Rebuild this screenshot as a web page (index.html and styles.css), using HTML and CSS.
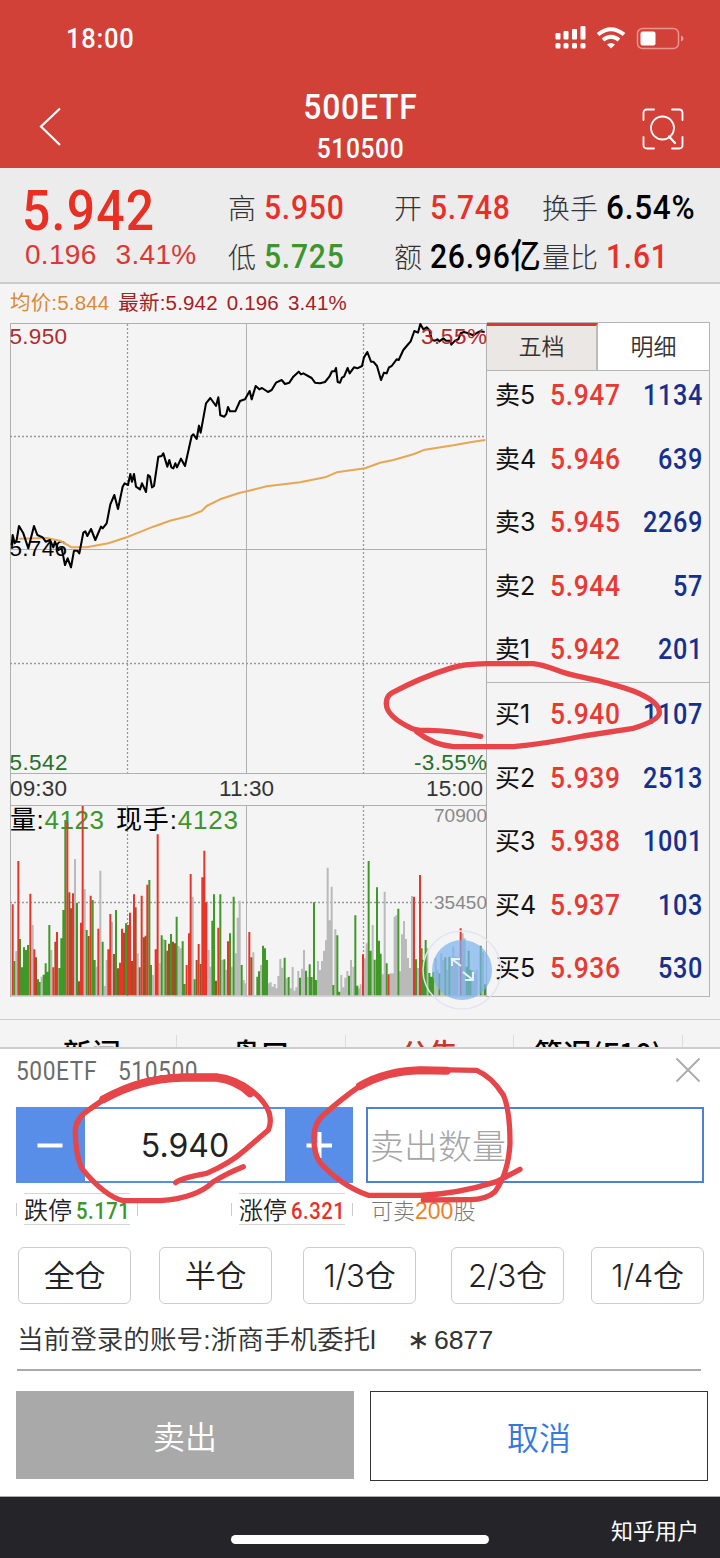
FILE: index.html
```html
<!DOCTYPE html>
<html lang="zh-CN">
<head>
<meta charset="utf-8">
<title>500ETF 510500</title>
<link rel="stylesheet" href="styles.css">
</head>
<body>
<div class="screen">
  <header class="top">
    <div class="status">
      <span class="clock din">18:00</span>
      <svg class="status-icons" width="130" height="28" viewBox="554 24 130 28">
        <g fill="#fff">
          <rect x="555.5" y="33" width="5" height="6.5" rx="1"/><rect x="563.5" y="31" width="5" height="8.500" rx="1"/><rect x="572" y="29" width="5" height="10.500" rx="1"/><rect x="580.500" y="26" width="5" height="13.500" rx="1"/>
          <rect x="555.500" y="43" width="5" height="5.500" rx="1.500"/><rect x="563.500" y="43" width="5" height="5.500" rx="1.500"/><rect x="572" y="43" width="5" height="5.500" rx="1.500"/><rect x="580.500" y="43" width="5" height="5.500" rx="1.500"/>
          <path d="M607 44.500Q611 41.500 615 44.500L611 48.500Z"/>
          <rect x="640.500" y="31.500" width="15" height="14" rx="2"/>
          <path d="M681 35.500q2.500 1 2.500 3t-2.500 3z" opacity=".5"/>
        </g>
        <path d="M598 34.500Q611 24 624 34.500M603 40Q611 33.500 619 40" fill="none" stroke="#fff" stroke-width="4"/>
        <rect x="637.500" y="28.500" width="41" height="20" rx="5" fill="none" stroke="#fff" stroke-width="1.500" opacity=".45"/>
      </svg>
    </div>
    <div class="nav">
      <svg class="back" width="24" height="40" viewBox="0 0 24 40"><path d="M21 1.500L2 19.500L21 38" fill="none" stroke="#fff" stroke-width="2.200"/></svg>
      <div class="title"><div class="name din">500ETF</div><div class="code din">510500</div></div>
      <svg class="scan" width="42" height="42" viewBox="0 0 42 42" fill="none" stroke="#fff" stroke-width="1.800" stroke-linecap="round"><path d="M12 1.500H5Q1.500 1.500 1.500 5V12M30 1.500H37Q40.500 1.500 40.500 5V12M1.500 29V37Q1.500 40.500 5 40.500H12M40.500 29V37Q40.500 40.500 37 40.500H30"/><circle cx="20.500" cy="20" r="11.500"/><path d="M27 28.500L33 35" stroke-width="2.200"/></svg>
    </div>
  </header>

  <section class="quote">
    <div class="last"><div class="last-price din">5.942</div><div class="last-change"><span>0.196</span><span>3.41%</span></div></div>
    <div class="stat"><label>高</label><b class="din red">5.950</b></div>
    <div class="stat"><label>开</label><b class="din red">5.748</b></div>
    <div class="stat"><label>换手</label><b class="din turnover">6.54%</b></div>
    <div class="stat"><label>低</label><b class="din green">5.725</b></div>
    <div class="stat"><label>额</label><b class="din">26.96亿</b></div>
    <div class="stat"><label>量比</label><b class="din red">1.61</b></div>
  </section>

  <div class="legend"><span class="avg">均价:5.844</span><span>最新:5.942</span><span>0.196</span><span>3.41%</span></div>

  <section class="market">
    <svg class="chart" width="487" height="675" viewBox="0 322 487 675">
      <g class="gridline">
        <path d="M10.500 997V323.500H486.500M10.500 549.500H486M10.500 773.500H486M246.500 323V773M10.500 805.500H486M246.500 805V996M10.500 996H487"/>
        <path class="dots" d="M10 436.500H486M10 663.500H486M127.500 324V773M363.500 324V773M10 902.500H434M127.500 806V996M363.500 806V996"/>
        <path d="M486.500 323V997"/>
      </g>
      <g class="line-label">
        <text x="9.500" y="344" textLength="57.500" class="up">5.950</text>
        <text x="9.500" y="556" textLength="57.500">5.746</text>
        <text x="9.500" y="770" textLength="58" class="down">5.542</text>
        <text x="414" y="770" textLength="73" class="down">-3.55%</text>
        <text x="10" y="796" textLength="57" class="time">09:30</text>
        <text x="219" y="796" textLength="55" class="time">11:30</text>
        <text x="426" y="796" textLength="57" class="time">15:00</text>
      </g>
      <g transform="translate(0 310) scale(.33333)" class="trend">
        <path class="mean" d="M56 686L140 684L180 692L215 712L260 712L325 700L385 680L460 650L510 632L570 617L605 603L620 588L660 568L720 548L744 543L800 529L900 517L975 502L1010 487L1095 475L1140 458L1180 450L1240 433L1275 419L1360 406L1420 395L1456 390"/>
        <path class="price" d="M35 705L38 675L44 700L50 690L57 648L70 670L85 715L102 648L112 675L128 682L137 695L150 690L160 712L165 695L175 720L185 715L195 765L203 745L213 772L222 722L232 722L238 730L250 668L256 664L262 678L273 657L286 690L303 650L308 655L320 640L331 583L343 555L354 597L368 530L374 520L384 525L391 492L396 515L402 492L408 530L420 538L426 520L438 546L444 495L450 500L456 532L462 528L475 440L485 438L490 430L502 470L508 450L514 472L520 475L526 460L531 472L543 446L555 468L575 378L580 373L590 387L597 347L602 368L618 280L631 264L648 288L655 262L661 316L673 320L679 312L684 291L690 304L706 304L720 273L735 268L749 243L755 268L767 228L778 238L786 234L804 246L815 240L828 218L845 210L855 222L868 218L880 200L896 185L903 193L910 190L935 204L945 218L960 220L975 216L988 200L996 184L1004 184L1008 174L1013 216L1020 218L1026 203L1032 200L1043 174L1049 190L1062 172L1072 175L1086 168L1092 142L1102 126L1113 155L1120 155L1131 168L1143 210L1152 188L1160 190L1167 172L1175 168L1190 148L1196 150L1210 120L1220 108L1232 94L1243 63L1254 68L1261 42L1270 58L1280 52L1288 60L1296 90L1305 92L1312 88L1318 94L1330 85L1338 92L1350 92L1354 104L1365 92L1375 88L1382 70L1392 66L1400 68L1410 72L1420 76L1432 68L1440 64L1454 66"/>
      </g>
      <text x="421" y="344" textLength="66" class="up">3.55%</text>
      <g class="volume-label">
        <text x="10" y="829" textLength="94">量:<tspan>4123</tspan></text>
        <text x="116" y="829" textLength="122">现手:<tspan>4123</tspan></text>
      </g>
      <g id="volume" transform="translate(0 740) scale(.33333)"></g>
      <g class="volume-axis"><text x="434" y="822" textLength="53">70900</text><text x="434" y="909" textLength="53">35450</text></g>
    </svg>
    <div class="book">
      <div class="book-tabs"><div class="tab active">五档</div><div class="tab">明细</div></div>
      <div class="sells">
        <div class="row"><i>卖5</i><b class="din">5.947</b><em class="din">1134</em></div>
        <div class="row"><i>卖4</i><b class="din">5.946</b><em class="din">639</em></div>
        <div class="row"><i>卖3</i><b class="din">5.945</b><em class="din">2269</em></div>
        <div class="row"><i>卖2</i><b class="din">5.944</b><em class="din">57</em></div>
        <div class="row"><i>卖1</i><b class="din">5.942</b><em class="din">201</em></div>
      </div>
      <div class="buys">
        <div class="row"><i>买1</i><b class="din">5.940</b><em class="din">1107</em></div>
        <div class="row"><i>买2</i><b class="din">5.939</b><em class="din">2513</em></div>
        <div class="row"><i>买3</i><b class="din">5.938</b><em class="din">1001</em></div>
        <div class="row"><i>买4</i><b class="din">5.937</b><em class="din">103</em></div>
        <div class="row"><i>买5</i><b class="din">5.936</b><em class="din">530</em></div>
      </div>
    </div>
    <svg class="expand" width="82" height="82" viewBox="0 0 82 82"><circle cx="41" cy="41" r="39" fill="none" stroke="#e2e5ef" stroke-width="1.500"/><circle cx="41" cy="41" r="30" fill="#7ab2ee" opacity=".7"/><path d="M40 37L31 30M31 37V30H39M42 43L52 51M44 51H52V43" fill="none" stroke="#e6f3ff" stroke-width="2"/></svg>
  </section>

  <nav class="info-tabs"><span>新闻</span><span>盘口</span><span class="on">公告</span><span>简况(F10)</span></nav>

  <section class="sheet">
    <div class="sheet-head"><span class="din">500ETF</span><span class="din">510500</span><svg width="26" height="26" viewBox="0 0 26 26"><path d="M1.500 1.500L24.500 24.500M24.500 1.500L1.500 24.500" stroke="#aaa" stroke-width="1.800"/></svg></div>
    <div class="inputs">
      <div class="stepper">
        <svg width="69" height="76" viewBox="0 0 69 76"><path d="M21.500 38.500H46.500" stroke="#fff" stroke-width="4"/></svg>
        <div class="value">5.940</div>
        <svg width="68" height="76" viewBox="0 0 68 76"><path d="M21.500 38.500H47M34.500 25V51" stroke="#fff" stroke-width="4"/></svg>
      </div>
      <div class="quantity">卖出数量</div>
    </div>
    <div class="limits">
      <div class="limit"><span>跌停<b class="din green">5.171</b></span></div>
      <div class="limit"><span>涨停<b class="din red">6.321</b></span></div>
      <div class="sellable">可卖<b>200</b>股</div>
    </div>
    <div class="ratios"><button>全仓</button><button>半仓</button><button>1/3仓</button><button>2/3仓</button><button>1/4仓</button></div>
    <div class="account"><span>当前登录的账号:浙商手机委托l</span><span class="star">∗</span><span>6877</span></div>
    <div class="actions"><button class="sell">卖出</button><button class="cancel">取消</button></div>
  </section>

  <footer class="bottom"><div class="home"></div><div class="credit">知乎用户</div></footer>

  <svg class="marks" width="720" height="1558" viewBox="0 0 720 1558">
    <g transform="translate(370 640) scale(.33333)">
      <path d="M332 289Q230 270 170 271Q140 272 125 265Q50 230 49 192Q48 170 65 159Q150 113 240 85Q280 72 350 71H490Q520 75 560 90Q590 102 640 112Q720 128 790 153Q870 185 868 218Q868 240 790 265L640 288Q520 312 430 320H250Q190 315 140 275"/>
    </g>
    <g transform="translate(0 1010) scale(.33333)">
      <path d="M527 518Q540 505 620 490Q690 460 735 420L805 360Q815 340 808 310C795 270 735 208 650 198H560C440 200 360 230 270 297Q225 325 226 365Q226 430 245 475Q315 560 370 572H480Q590 565 640 515Q680 490 730 470"/>
      <path class="thick" d="M310 268Q420 205 550 203H650Q710 210 750 250"/>
    </g>
    <g transform="translate(360 1010) scale(.33333)">
      <path d="M480 478L410 515Q290 553 180 556H25Q-60 525 -122 455Q-140 425 -138 380Q-138 340 -110 315Q-50 262 0 228Q80 180 180 178L350 181Q395 200 430 255Q450 300 450 400Q445 490 405 545Q380 568 330 569L190 570"/>
      <path class="thick" d="M0 228Q80 183 180 181L260 182"/>
    </g>
  </svg>
</div>
<script src="chart.js"></script>
</body>
</html>
```
FILE: styles.css
```css
* { box-sizing: border-box; }
body { margin: 0; background: #f4f4f4; color: #111; font-family: "Liberation Sans", "Noto Sans CJK SC", sans-serif; }
b, i, em { font-weight: inherit; font-style: normal; }
button { padding: 0; background: #fff; font-family: inherit; }
.screen { position: relative; width: 720px; height: 1558px; overflow: hidden; display: flex; flex-direction: column; }
.din { display: inline-block; font-family: Roboto, "Noto Sans CJK SC", sans-serif; font-weight: 500; white-space: nowrap; letter-spacing: .025em; transform: scaleX(.91); transform-origin: left; }
.red { color: #e92f29; }
.green { color: #3b962b; }

.top { height: 168px; background: #d24137; color: #fff; }
.status { height: 76px; padding: 24px 36px 0 66px; display: flex; justify-content: space-between; }
.clock { font-size: 28px; line-height: 30px; letter-spacing: .03em; }
.nav { height: 92px; padding: 0 36px 0 39px; display: grid; grid-template-columns: 24px 1fr 42px; }
.back { margin-top: 31px; }
.scan { margin-top: 32px; }
.title { margin-left: 17px; padding-top: 11px; padding-right: 1px; text-align: center; }
.title .din { display: block; transform-origin: center; }
.name { font-size: 35px; line-height: 42px; }
.code { font-size: 27px; line-height: 40px; }

.quote { height: 116px; padding-top: 15px; background: #ececec; border-bottom: 2px solid #ccc; display: grid; grid-template-columns: 228px 166px 148px 178px; grid-template-rows: 49px 49px; }
.last { grid-row: 1 / 3; padding-left: 22px; }
.last-price { font-size: 56px; line-height: 56px; color: #e92f23; transform: scaleX(.89); }
.last-change { display: flex; gap: 19px; padding-left: 3px; font-size: 28px; line-height: 32px; color: #dd3732; letter-spacing: .3px; }
.stat { display: flex; align-items: center; gap: 8px; font-size: 34px; line-height: 47px; white-space: nowrap; color: #000; }
.stat label { font: 300 28px/45px "Noto Sans CJK SC"; color: #333; }
.stat .din { transform: scaleX(.885); }
.stat .turnover { transform: scaleX(.925); }
.stat .red { color: #e92f29; }
.stat .green { color: #3b962b; }

.legend { height: 38px; padding-left: 10px; display: flex; gap: 9px; font-size: 20.500px; letter-spacing: .17px; line-height: 37px; color: #a52022; white-space: nowrap; }
.legend .avg { color: #d98a3b; }

.market { position: relative; height: 675px; display: grid; grid-template-columns: 487px 223px; }
.chart { display: block; font: 22.500px "Liberation Sans", "Noto Sans CJK SC", sans-serif; }
.gridline path { fill: none; stroke: #b0b0b0; stroke-width: 1; }
.gridline .dots { stroke-dasharray: 2 2; stroke: #999; stroke-width: 1.300; }
.up { fill: #b5282b; }
.down { fill: #28702a; }
.time { fill: #333; }
.trend path { fill: none; stroke-width: 6.200; stroke-linejoin: round; }
.trend .mean { stroke: #e7a654; }
.trend .price { stroke: #000; }
.volume-label { font-size: 26px; }
.volume-label tspan { fill: #3b962b; }
.volume-axis { font-size: 19px; fill: #888; }
.bar { stroke-width: 6; fill: none; }
.bar-r { stroke: #e8352a; }
.bar-g { stroke: #3f9827; }
.bar-b { stroke: #9a5423; }
.bar-x { stroke: #bababa; }
.book { height: 675px; border: 1px solid #b5b5b5; border-width: 1px 1px 1px 0; }
.book-tabs { height: 48px; display: grid; grid-template-columns: 111px 1fr; border-bottom: 1px solid #b5b5b5; background: #fff; }
.tab { text-align: center; font: 350 23px/44px "Noto Sans CJK SC"; color: #333; }
.tab.active { background: #ebe7e5; border-top: 3px solid #e33236; border-right: 2px solid #bbb; line-height: 39px; }
.sells { height: 311px; }
.buys { height: 313px; border-top: 1px solid #b5b5b5; }
.row { height: 63.600px; padding: 0 6px 0 8px; display: grid; grid-template-columns: 55px 75px 1fr; line-height: 49px; white-space: nowrap; }
.buys .row { line-height: 62px; }
.row i { font-family: Inter, "Noto Sans CJK SC", sans-serif; font-size: 25px; color: #111; }
.row .din { font-size: 29px; color: #e63a32; }
.row em.din { color: #17308d; text-align: right; transform: scaleX(.87); transform-origin: right; }
.expand { position: absolute; left: 421px; top: 607px; }

.info-tabs { margin-top: 22px; height: 30px; border-top: 1px solid #ccc; border-bottom: 2px solid #ccc; overflow: hidden; padding: 15px 37px 0 8px; display: grid; grid-template-columns: repeat(4, 1fr); text-align: center; font: 500 29px/34px "Noto Sans CJK SC"; color: #000; }
.info-tabs span { border-right: 1px solid #ddd; }
.info-tabs .on { color: #c2392e; }

.sheet { height: 447px; background: #fff; }
.sheet-head { height: 58px; padding: 7px 19px 0 16px; display: flex; gap: 13px; font-size: 25px; line-height: 32px; color: #6b6b6b; }
.sheet-head .din { font-weight: 400; }
.sheet-head svg { margin-left: auto; margin-top: 1px; }
.inputs { padding: 0 16px; height: 76px; display: flex; gap: 13px; }
.stepper { width: 337px; display: flex; background: #588ee7; }
.value { width: 200px; height: 72px; margin: 2px 0; background: #fff; text-align: center; font: 400 32px/73px Inter, sans-serif; color: #222; }
.quantity { flex: 1; border: 2px solid #507fd8; padding-left: 2px; font: 300 34px/71px "Noto Sans CJK SC"; color: #a5a5a5; }
.limits { height: 64px; padding: 10px 16px 0; display: grid; grid-template-columns: 215px 140px 1fr; font: 350 24px/30px "Noto Sans CJK SC"; color: #222; }
.limit { width: 122px; height: 32px; padding: 0 8px; position: relative; }
.limit::before { content: ""; position: absolute; inset: 10px 0 9px; border: solid #ccc; border-width: 0 1px; }
.limit span { display: block; height: 32px; border: solid #d5d5d5; border-width: 1px 0; white-space: nowrap; }
.limit b { margin-left: 4px; font-size: 23px; transform: scaleX(.88); }
.sellable { font-size: 22px; font-weight: 300; color: #777; line-height: 33px; white-space: nowrap; }
.sellable b { font: 23px "Liberation Sans"; color: #ec8129; }
.ratios { height: 57px; margin-left: 18px; display: flex; }
.ratios button { width: 113px; border: 1.500px solid #ccc; border-radius: 6px; font: 350 31px/55px Inter, "Noto Sans CJK SC", sans-serif; letter-spacing: -.2px; color: #222; white-space: nowrap; }
.ratios button:nth-child(2) { margin-left: 28px; }
.ratios button:nth-child(3) { margin-left: 31px; }
.ratios button:nth-child(4) { margin-left: 35px; }
.ratios button:nth-child(5) { margin-left: 27px; }
.account { height: 67px; margin: 0 19px 0 17px; border-bottom: 2px solid #aaa; display: flex; font: 350 26.600px/73px "Liberation Sans", "Noto Sans CJK SC"; color: #333; white-space: nowrap; }
.star { margin: 0 4px 0 31px; }
.actions { margin: 20px 12px 0 16px; display: grid; grid-template-columns: 338px 338px; justify-content: space-between; align-items: start; }
.actions button { font: 350 32px/86px "Noto Sans CJK SC"; }
.actions .sell { height: 88px; border: 0; background: #a9a9a9; color: #fff; }
.actions .cancel { height: 90px; border: 1px solid #333; color: #3478e0; }

.bottom { height: 62px; background: #252529; display: grid; grid-template-columns: 231px 258px 1fr; border-top: 1px solid #aaa; }
.home { grid-column: 2; height: 9px; margin-top: 38px; border-radius: 5px; background: #fff; }
.credit { padding: 16px 21px 0 0; text-align: right; font: 400 22px/32px "Noto Sans CJK SC"; color: #fff; }
.marks { position: absolute; left: 0; top: 0; pointer-events: none; }
.marks path { fill: none; stroke: #e6454a; stroke-width: 16; stroke-linecap: round; stroke-linejoin: round; }
.marks .thick { stroke-width: 24; }
```
FILE: chart.js
```js
// Volume bars: x position, direction (r up, g down, b mixed, x flat), top.
const volume = `38r493 43g663 49x633 55r363 60g597 66g682 72g622 78g630 84g615 91r461 98x555 103r628 108b652 114g718 119g726 125x710 131g704 137g670 142g695 148g555 154x630 160r682 166b605 171r576 178g684 184g595 190g510 196g240 202r245 208b457 214b505 219r460 225x357 231g488 237b724 243r548 248r198 254x447 260g570 266b588 272r467 278g480 284g660 290x680 295r566 301x392 308g605 314x738 320x660 325r628 331r522 336x545 342b642 348g510 354b685 360r668 366r566 372b578 378g550 384r555 390r518 396b663 402r463 407b502 413x640 419b682 425r467 431b592 437b587 442r434 448g420 453g675 459x705 467r628 473r283 479x670 485g586 490x597 496g600 502b632 507b611 513g582 519b605 525b610 530g530 536x618 542x625 548g604 554g732 560r675 567r580 572r402 578x470 584g718 590b660 596r612 602b672 607r412 613r332 619r487 626x630 631x680 637g542 642g463 648b722 655r563 661g463 667x660 673g658 679x690 684r604 690g580 695x680 701g470 707x640 713x533 719x482 725g675 731x720 737x730 748r576
754b652 760x637 772g710 777g694 783x675 789g617 795g625 801g660 807x730 812x727 818x740 824x732 830x745 835x708 841x657 847x683 854g653 860x715 866g711 872x745 878x681 883x752 889x742 895x693 900g713 906x686 912x630 918g692 923x710 929g673 935g711 942g487 948g720 954x663 960x690 966x663 972x632 978x601 983x383 989x541 995x440 1000g735 1006x568 1012g586 1018g755 1024x705 1030x742 1036x713 1042x693 1047g707 1053x660 1060x680 1066g526 1072g737 1077x745 1082x733 1089r643 1095x655 1100x610 1106g363 1112g632 1118x555 1124g659 1131g442 1137g602 1142g641 1148x703 1154x455 1160g670 1166r703 1172x700 1178x700 1184x530 1189x526 1195g506 1200x694 1206x583 1212x543 1218x597 1224x654 1230x684 1236x468 1242r470 1248g658 1254x684 1260r405 1265g625 1271g660 1277g600 1282x625 1288g699 1294g710 1300g696 1307x655 1312x690 1318g700 1324x640 1330x660 1336g652 1342x690 1348g650 1354x660 1360x620 1366x650 1372x650 1382r565 1388x580 1394x595 1400g680 1406g632 1412g690 1418x690 1424x700 1430x690 1442g617 1449x637 1455g733`;
const paths = { r: '', g: '', b: '', x: '' };
for (const [, x, kind, top] of volume.matchAll(/(\d+)([rgbx])(\d+)/g)) {
  paths[kind] += `M${x} 766V${top}`;
}
const group = document.getElementById('volume');
for (const kind of ['x', 'g', 'b', 'r']) {
  const path = document.createElementNS('http://www.w3.org/2000/svg', 'path');
  path.setAttribute('class', `bar bar-${kind}`);
  path.setAttribute('d', paths[kind]);
  group.append(path);
}
```
